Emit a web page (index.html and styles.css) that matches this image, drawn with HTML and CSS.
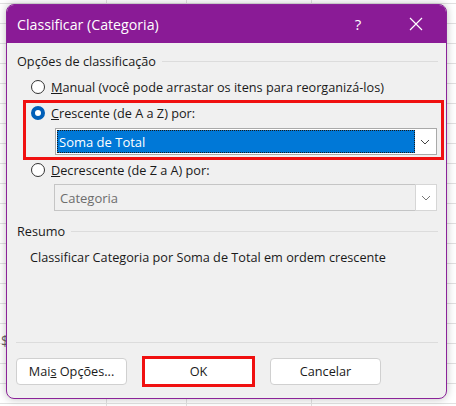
FILE: index.html
```html
<!DOCTYPE html>
<html lang="pt-BR">
<head>
    <meta charset="UTF-8">
    <meta name="viewport" content="width=device-width, initial-scale=1.0">
    <title>Classificar (Categoria)</title>
    <link rel="stylesheet" href="styles.css">
</head>
<body>
    <span class="cell-glyph">$</span>

    <div class="dialog">
        <div class="titlebar">
            <span class="title">Classificar (Categoria)</span>
            <span class="help">?</span>
            <span class="close">
                <svg width="14" height="14" viewBox="0 0 14 14">
                    <path d="M1 1 L13 13 M13 1 L1 13" stroke="#fff" stroke-width="1.2" fill="none"/>
                </svg>
            </span>
        </div>

        <div class="body">
            <div class="group-label">Opções de classificação</div>

            <div class="radio-row first">
                <span class="radio"></span>
                <span><u>M</u>anual (você pode arrastar os itens para reorganizá-los)</span>
            </div>

            <!-- opcao marcada, com destaque vermelho -->
            <div class="highlight">
                <div class="radio-row">
                    <span class="radio checked"></span>
                    <span><u>C</u>rescente (de A a Z) por:</span>
                </div>
                <div class="combo">
                    <span class="combo-value selected">Soma de Total</span>
                    <span class="combo-btn">
                        <svg width="10" height="6" viewBox="0 0 10 6"><path d="M1 1 L5 5 L9 1" stroke="#444" fill="none"/></svg>
                    </span>
                </div>
            </div>

            <div class="radio-row">
                <span class="radio"></span>
                <span><u>D</u>ecrescente (de Z a A) por:</span>
            </div>
            <div class="combo disabled">
                <span class="combo-value">Categoria</span>
                <span class="combo-btn">
                    <svg width="10" height="6" viewBox="0 0 10 6"><path d="M1 1 L5 5 L9 1" stroke="#777" fill="none"/></svg>
                </span>
            </div>

            <div class="group-label resumo">Resumo</div>
            <p class="summary">Classificar Categoria por Soma de Total em ordem crescente</p>

            <div class="footer">
                <button class="btn">Mai<u>s</u> Opções...</button>
                <button class="btn ok">OK</button>
                <button class="btn">Cancelar</button>
            </div>
        </div>
    </div>
</body>
</html>
```

FILE: styles.css
```css
/* Fundo de planilha */
body {
    margin: 0;
    height: 406px;
    overflow: hidden;
    background-color: #ffffff;
    background-image:
        linear-gradient(to right, transparent 106px, #e1e1e1 106px, #e1e1e1 107px, transparent 107px,
            transparent 186px, #e1e1e1 186px, #e1e1e1 187px, transparent 187px,
            transparent 311px, #e1e1e1 311px, #e1e1e1 312px, transparent 312px),
        repeating-linear-gradient(to bottom, #e1e1e1 0, #e1e1e1 1px, transparent 1px, transparent 20px);
    background-position: 0 0, 0 3px;
    font-family: "Open Sans", "Noto Sans", sans-serif;
    font-size: 12.7px;
    color: #1a1a1a;
    position: relative;
}

.cell-glyph {
    position: absolute;
    left: 1px;
    top: 331px;
    font-size: 14px;
    color: #666;
}

/* Janela */
.dialog {
    position: relative;
    margin: 4px 0 0 6px;
    width: 441px;
    height: 395px;
    border-radius: 8px;
    overflow: hidden;
    background-color: #f0f0f0;
    border: 1px solid #8b2399;
    box-sizing: border-box;
    box-shadow: 0 0 8px rgba(0, 0, 0, 0.25);
    display: flex;
    flex-direction: column;
}

.titlebar {
    height: 38px;
    background-color: #8a1b96;
    color: #ffffff;
    display: flex;
    align-items: center;
    padding-left: 10px;
    flex-shrink: 0;
}

.title {
    font-size: 14.2px;
    flex: 1;
}

.help {
    font-size: 15px;
    width: 20px;
    text-align: center;
    margin-right: 41px;
}

.close {
    display: flex;
    margin-right: 23px;
}

.body {
    flex: 1;
    display: flex;
    flex-direction: column;
    padding: 10px 8px 0 10px;
}

.group-label {
    height: 16px;
    display: flex;
    align-items: center;
    gap: 6px;
}

.group-label::after {
    content: "";
    flex: 1;
    border-top: 1px solid #dcdcdc;
}

.radio-row {
    height: 20px;
    display: flex;
    align-items: center;
    gap: 6px;
    margin-left: 14px;
}

.radio-row.first {
    margin-top: 8px;
}

.radio {
    width: 14px;
    height: 14px;
    border: 1px solid #333333;
    border-radius: 50%;
    background-color: #ffffff;
    box-sizing: border-box;
    flex-shrink: 0;
}

.radio.checked {
    border: 4px solid #005fb8;
    background-color: #ffffff;
}

.highlight {
    margin: 3px -6px 0 6px;
    border: 3px solid #f01010;
    padding-bottom: 2px;
}

.highlight .radio-row {
    margin-left: 5px;
}

.combo {
    height: 27px;
    margin: 5px 4px 0 29px;
    border: 1px solid #a9a9a9;
    background-color: #ffffff;
    box-sizing: border-box;
    display: flex;
    padding: 1px;
}

.combo-value {
    flex: 1;
    display: flex;
    align-items: center;
    padding-left: 2px;
    font-size: 13px;
}

.combo-value.selected {
    background-color: #0078d7;
    color: #ffffff;
    outline: 1px dotted #1a1a1a;
    outline-offset: -1px;
}

.combo-btn {
    width: 20px;
    display: flex;
    align-items: center;
    justify-content: center;
    background-color: #ffffff;
}

.combo.disabled {
    margin: 4px 1px 0 37px;
    background-color: #f0f0f0;
    border-color: #c5c5c5;
    color: #6d6d6d;
}

.combo.disabled .combo-value {
    padding-left: 4px;
}

.combo.disabled .combo-btn {
    border: 1px solid #d6d6d6;
    margin: -2px -2px -2px 0;
}

.resumo {
    margin-top: 12px;
}

.summary {
    margin: 10px 0 0 13px;
    line-height: 16px;
}

.footer {
    margin-top: auto;
    border-top: 1px solid #dcdcdc;
    height: 54px;
    display: flex;
    align-items: center;
    gap: 15px;
    padding-top: 1px;
    margin-left: -1px;
}

.btn {
    width: 111px;
    height: 27px;
    background-color: #ffffff;
    border: 1px solid #d0d0d0;
    border-radius: 4px;
    font-family: inherit;
    font-size: 12.7px;
    color: #1a1a1a;
}

.btn.ok {
    width: 113px;
    height: 31px;
    border: 3px solid #f01010;
    border-radius: 0;
}
```
